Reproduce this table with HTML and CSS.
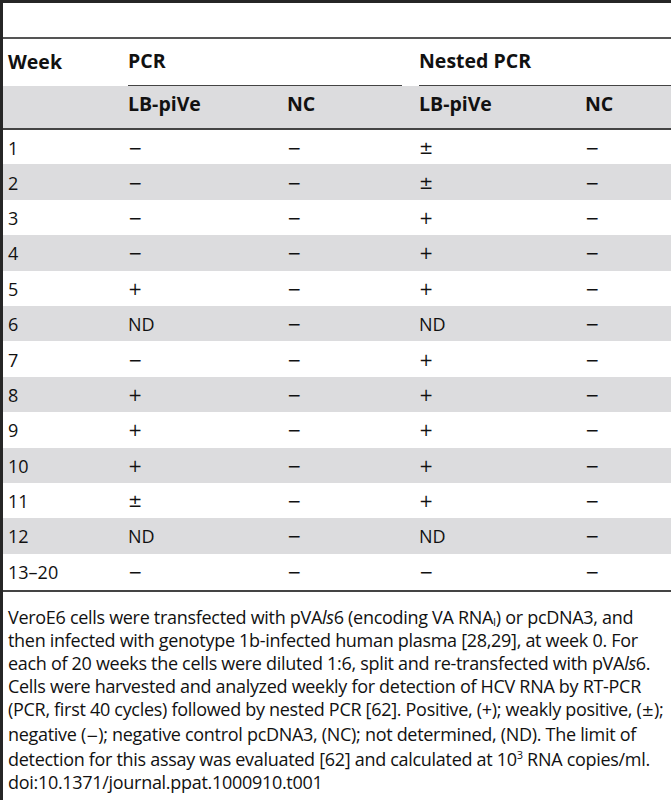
FILE: index.html
```html
<!DOCTYPE html>
<html>
<head>
    <meta name='viewport' content='width=device-width, initial-scale=1'>
    <title>Table 1 · HCV RNA detection</title>
    <link rel="stylesheet" href="styles.css">
</head>
<body>
    <div class="frame">
        <div class="spacer"></div>
        <table class="data">
            <colgroup>
                <col class="c-week">
                <col class="c-pcr1">
                <col class="c-pcr2">
                <col class="c-nest1">
                <col class="c-nest2">
            </colgroup>
            <thead>
                <tr class="group-row">
                    <th>Week</th>
                    <th colspan="2"><span class="group pcr">PCR</span></th>
                    <th colspan="2"><span class="group">Nested PCR</span></th>
                </tr>
                <tr class="sub-row">
                    <th></th>
                    <th>LB-piVe</th>
                    <th>NC</th>
                    <th>LB-piVe</th>
                    <th>NC</th>
                </tr>
            </thead>
            <tbody>
                <tr><td>1</td><td>−</td><td>−</td><td>±</td><td>−</td></tr>
                <tr><td>2</td><td>−</td><td>−</td><td>±</td><td>−</td></tr>
                <tr><td>3</td><td>−</td><td>−</td><td>+</td><td>−</td></tr>
                <tr><td>4</td><td>−</td><td>−</td><td>+</td><td>−</td></tr>
                <tr><td>5</td><td>+</td><td>−</td><td>+</td><td>−</td></tr>
                <tr><td>6</td><td class="nd">ND</td><td>−</td><td class="nd">ND</td><td>−</td></tr>
                <tr><td>7</td><td>−</td><td>−</td><td>+</td><td>−</td></tr>
                <tr><td>8</td><td>+</td><td>−</td><td>+</td><td>−</td></tr>
                <tr><td>9</td><td>+</td><td>−</td><td>+</td><td>−</td></tr>
                <tr><td>10</td><td>+</td><td>−</td><td>+</td><td>−</td></tr>
                <tr><td>11</td><td>±</td><td>−</td><td>+</td><td>−</td></tr>
                <tr><td>12</td><td class="nd">ND</td><td>−</td><td class="nd">ND</td><td>−</td></tr>
                <tr class="last"><td>13–20</td><td>−</td><td>−</td><td>−</td><td>−</td></tr>
            </tbody>
        </table>
        <p class="caption">VeroE6 cells were transfected with pVA<i>ls</i>6 (encoding VA RNA<sub>I</sub>) or pcDNA3, and then infected with genotype 1b-infected human plasma [28,29], at week 0. For each of 20 weeks the cells were diluted 1:6, split and re-transfected with pVA<i>ls</i>6. Cells were harvested and analyzed weekly for detection of HCV RNA by RT-PCR (PCR, first 40 cycles) followed by nested PCR [62]. Positive, (+); weakly positive, (<span class="sym">±</span>); negative (<span class="sym">−</span>); negative control pcDNA3, (NC); not determined, (ND). The limit of detection for this assay was evaluated [62] and calculated at 10<sup>3</sup> RNA copies/ml.</p>
        <p class="doi">doi:10.1371/journal.ppat.1000910.t001</p>
    </div>
</body>
</html>
```

FILE: styles.css
```css
* {
    box-sizing: border-box;
    margin: 0;
    padding: 0;
}

body {
    font-family: 'Open Sans', 'Noto Sans', sans-serif;
    color: #111;
    background: #fff;
}

.frame {
    border-top: 3px solid #262626;
    border-left: 3px solid #262626;
    min-height: 800px;
}

.spacer {
    height: 36px;
    border-bottom: 2px solid #555;
}

.data {
    width: 668px;
    border-collapse: collapse;
    table-layout: fixed;
    font-size: 18px;
}

.c-week { width: 125px; }
.c-pcr1 { width: 159px; }
.c-pcr2 { width: 132px; }
.c-nest1 { width: 166px; }
.c-nest2 { width: 86px; }

th {
    font-weight: 700;
    text-align: left;
    font-size: 19.5px;
}

th:first-child,
td:first-child {
    padding-left: 5px;
}

.group-row th {
    height: 47px;
    vertical-align: bottom;
}

.group-row th:first-child {
    padding-bottom: 11px;
}

.group {
    display: block;
    border-bottom: 1px solid #444;
    padding-bottom: 11px;
}

.group.pcr {
    margin-right: 17px;
}

.sub-row th {
    height: 43px;
    padding-bottom: 7px;
    background: #dcdcde;
    border-bottom: 2px solid #444;
}

td {
    height: 35.4px;
    padding-top: 1px;
}

tbody td:not(:first-child) {
    font-family: 'DejaVu Sans', sans-serif;
    font-size: 17px;
}

tbody td.nd {
    font-family: 'Open Sans', 'Noto Sans', sans-serif;
    font-size: 18px;
}

tbody tr:nth-child(even) td {
    background: #dcdcde;
}

tr.last td {
    height: 37px;
    border-bottom: 2px solid #444;
}

.caption,
.doi {
    font-size: 18px;
    line-height: 23px;
    letter-spacing: -0.3px;
    padding-left: 5px;
}

.caption {
    margin-top: 14px;
}

.sym {
    font-family: 'DejaVu Sans', sans-serif;
    font-size: 15px;
}

.caption sub {
    font-size: 11px;
    vertical-align: -2px;
    line-height: 0;
}

.caption sup {
    font-size: 11px;
    vertical-align: 7px;
    line-height: 0;
}
```
